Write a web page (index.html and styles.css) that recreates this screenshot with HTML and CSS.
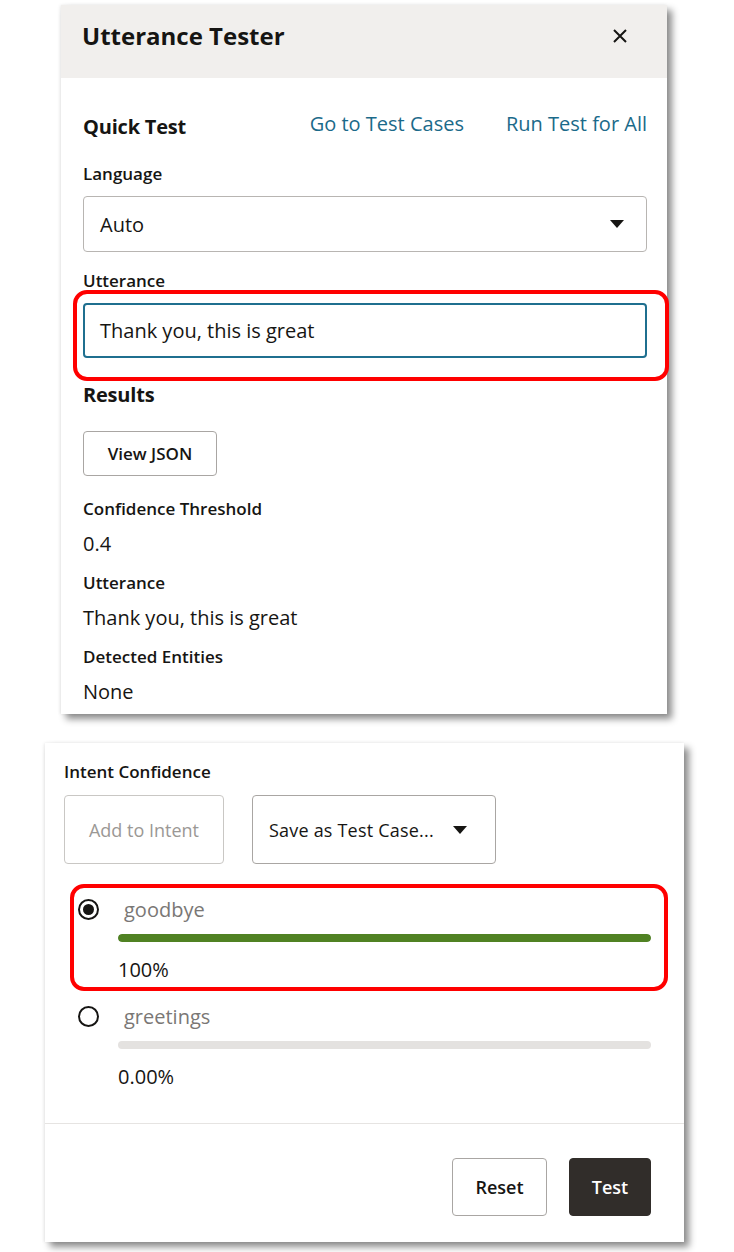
FILE: index.html
```html
<!DOCTYPE html>
<html lang="en">
<head>
<meta charset="utf-8">
<title>Utterance Tester</title>
<link rel="stylesheet" href="styles.css">
</head>
<body>
<section class="panel panel-top">
  <header class="panel-header">
    <h1 class="title">Utterance Tester</h1>
    <button class="close" aria-label="Close">
      <svg width="16" height="16" viewBox="0 0 16 16"><path d="M2 2 L14 14 M14 2 L2 14" stroke="#161513" stroke-width="2" fill="none"/></svg>
    </button>
  </header>
  <div class="panel-body">
    <div class="quick-row">
      <h2 class="section-title">Quick Test</h2>
      <div class="links">
        <a class="link">Go to Test Cases</a>
        <a class="link">Run Test for All</a>
      </div>
    </div>
    <div class="field-label first">Language</div>
    <div class="select">
      <span>Auto</span>
      <svg class="caret" width="14" height="8" viewBox="0 0 14 8"><path d="M0 0 H14 L7 8 Z" fill="#161513"/></svg>
    </div>
    <div class="field-label">Utterance</div>
    <div class="input">Thank you, this is great</div>
    <h2 class="section-title results">Results</h2>
    <button class="btn btn-json">View JSON</button>
    <div class="out-label first">Confidence Threshold</div>
    <div class="out-value">0.4</div>
    <div class="out-label">Utterance</div>
    <div class="out-value">Thank you, this is great</div>
    <div class="out-label">Detected Entities</div>
    <div class="out-value">None</div>
  </div>
  <div class="highlight highlight-top"></div>
</section>

<section class="panel panel-bottom">
  <div class="intent-body">
    <div class="out-label ic">Intent Confidence</div>
    <div class="intent-actions">
      <button class="btn btn-tall btn-disabled">Add to Intent</button>
      <button class="btn btn-tall btn-save">Save as Test Case...
        <svg class="caret" width="14" height="8" viewBox="0 0 14 8"><path d="M0 0 H14 L7 8 Z" fill="#161513"/></svg>
      </button>
    </div>
    <div class="intents">
      <div class="intent">
        <span class="radio checked"></span>
        <div class="intent-main">
          <div class="intent-name">goodbye</div>
          <div class="bar"><div class="bar-fill" style="width:100%"></div></div>
          <div class="intent-pct">100%</div>
        </div>
      </div>
      <div class="intent">
        <span class="radio"></span>
        <div class="intent-main">
          <div class="intent-name">greetings</div>
          <div class="bar"><div class="bar-fill" style="width:0%"></div></div>
          <div class="intent-pct">0.00%</div>
        </div>
      </div>
    </div>
  </div>
  <footer class="panel-footer">
    <button class="btn btn-foot btn-reset">Reset</button>
    <button class="btn btn-foot btn-test">Test</button>
  </footer>
  <div class="highlight highlight-bottom"></div>
</section>
</body>
</html>
```

FILE: styles.css
```css
* { box-sizing: border-box; }
html, body { margin: 0; padding: 0; background: #ffffff; }
body {
  font-family: "Open Sans", "Noto Sans", "Liberation Sans", sans-serif;
  color: #161513;
  width: 734px;
  height: 1252px;
  overflow: hidden;
  padding-top: 5px;
}
button { font-family: inherit; cursor: pointer; }

.panel {
  position: relative;
  background: #ffffff;
  box-shadow: 5px 5px 7px rgba(0,0,0,0.45), -1px 0 3px rgba(0,0,0,0.08);
}
.panel-top {
  margin-left: 61px;
  width: 606px;
  height: 709px;
}
.panel-bottom {
  margin-left: 45px;
  margin-top: 29px;
  width: 639px;
  height: 499px;
  display: flex;
  flex-direction: column;
}

.panel-header {
  height: 73px;
  background: #f1efed;
  display: flex;
  align-items: center;
  justify-content: space-between;
  padding: 0 35px 0 21px;
}
.title {
  margin: 0;
  font-size: 24px;
  font-weight: 700;
  line-height: 30px;
  margin-top: -12px;
}
.close {
  background: none;
  border: none;
  padding: 0;
  width: 24px;
  height: 24px;
  display: flex;
  align-items: center;
  justify-content: center;
  margin-top: -12px;
}

.panel-body {
  padding: 34px 20px 0 22px;
}
.quick-row {
  display: flex;
  align-items: center;
  justify-content: space-between;
  height: 30px;
}
.section-title {
  margin: 0;
  font-size: 20px;
  font-weight: 700;
  line-height: 26px;
  letter-spacing: -0.2px;
}
.links { display: flex; gap: 42px; }
.link {
  color: #1b6a8a;
  font-size: 20px;
  line-height: 26px;
  margin-top: -6px;
}

.field-label {
  font-size: 17px;
  line-height: 22px;
  font-weight: 600;
  margin-top: 18px;
}
.field-label.first { margin-top: 21px; }

.select, .input {
  margin-top: 11px;
  height: 56px;
  border-radius: 4px;
  font-size: 20px;
  display: flex;
  align-items: center;
  padding: 0 16px;
}
.select {
  border: 1px solid #b8b5b2;
  justify-content: space-between;
  padding-right: 22px;
}
.input {
  height: 55px;
  border: 2px solid #1f6f8f;
  padding-left: 15px;
}

.results { margin-top: 24px; }

.btn {
  background: #ffffff;
  border: 1px solid #a9a6a3;
  border-radius: 4px;
  color: #161513;
  font-weight: 600;
  font-size: 17px;
}
.btn-json {
  margin-top: 23px;
  width: 134px;
  height: 45px;
  display: block;
}

.out-label {
  font-size: 17px;
  line-height: 22px;
  font-weight: 600;
  margin-top: 15px;
}
.out-label.first { margin-top: 22px; }
.out-value {
  font-size: 20px;
  line-height: 26px;
  margin-top: 11px;
}

/* bottom panel */
.intent-body {
  padding: 18px 33px 0 19px;
}
.out-label.ic { margin-top: 0; }
.intent-actions {
  display: flex;
  gap: 28px;
  margin-top: 12px;
}
.btn-tall {
  height: 69px;
  font-weight: 400;
  font-size: 18px;
}
.btn-disabled {
  width: 160px;
  color: #9b9895;
  border-color: #c9c7c4;
}
.btn-save {
  width: 244px;
  display: flex;
  align-items: center;
  justify-content: space-between;
  padding: 0 28px 0 16px;
  letter-spacing: 0.2px;
}

.intents {
  margin-top: 32px;
  display: flex;
  flex-direction: column;
  gap: 20px;
}
.intent {
  display: flex;
  align-items: flex-start;
}
.radio {
  flex: none;
  width: 21px;
  height: 21px;
  border: 2px solid #161513;
  border-radius: 50%;
  margin-left: 14px;
  margin-right: 19px;
  margin-top: 3px;
  display: flex;
  align-items: center;
  justify-content: center;
}
.radio.checked::after {
  content: "";
  width: 11px;
  height: 11px;
  border-radius: 50%;
  background: #161513;
}
.intent-main { flex: 1; }
.intent-name {
  font-size: 20px;
  line-height: 28px;
  color: #7a7775;
  padding-left: 6px;
}
.bar {
  margin-top: 10px;
  height: 8px;
  border-radius: 4px;
  background: #e4e2e0;
  overflow: hidden;
}
.bar-fill {
  height: 100%;
  background: #508223;
  border-radius: 4px;
}
.intent-pct {
  font-size: 20px;
  line-height: 26px;
  margin-top: 15px;
}

.panel-footer {
  margin-top: auto;
  border-top: 1px solid #e6e4e2;
  padding: 34px 33px 26px 0;
  display: flex;
  justify-content: flex-end;
  gap: 22px;
}
.btn-foot {
  height: 58px;
  font-size: 18px;
}
.btn-reset { width: 95px; }
.btn-test {
  width: 82px;
  background: #312d2a;
  border-color: #312d2a;
  color: #ffffff;
}

.highlight {
  position: absolute;
  border: 4px solid #ff0000;
  border-radius: 14px;
  pointer-events: none;
}
.highlight-top {
  left: 12px;
  top: 285px;
  width: 596px;
  height: 91px;
}
.highlight-bottom {
  left: 25px;
  top: 141px;
  width: 598px;
  height: 107px;
}
```
